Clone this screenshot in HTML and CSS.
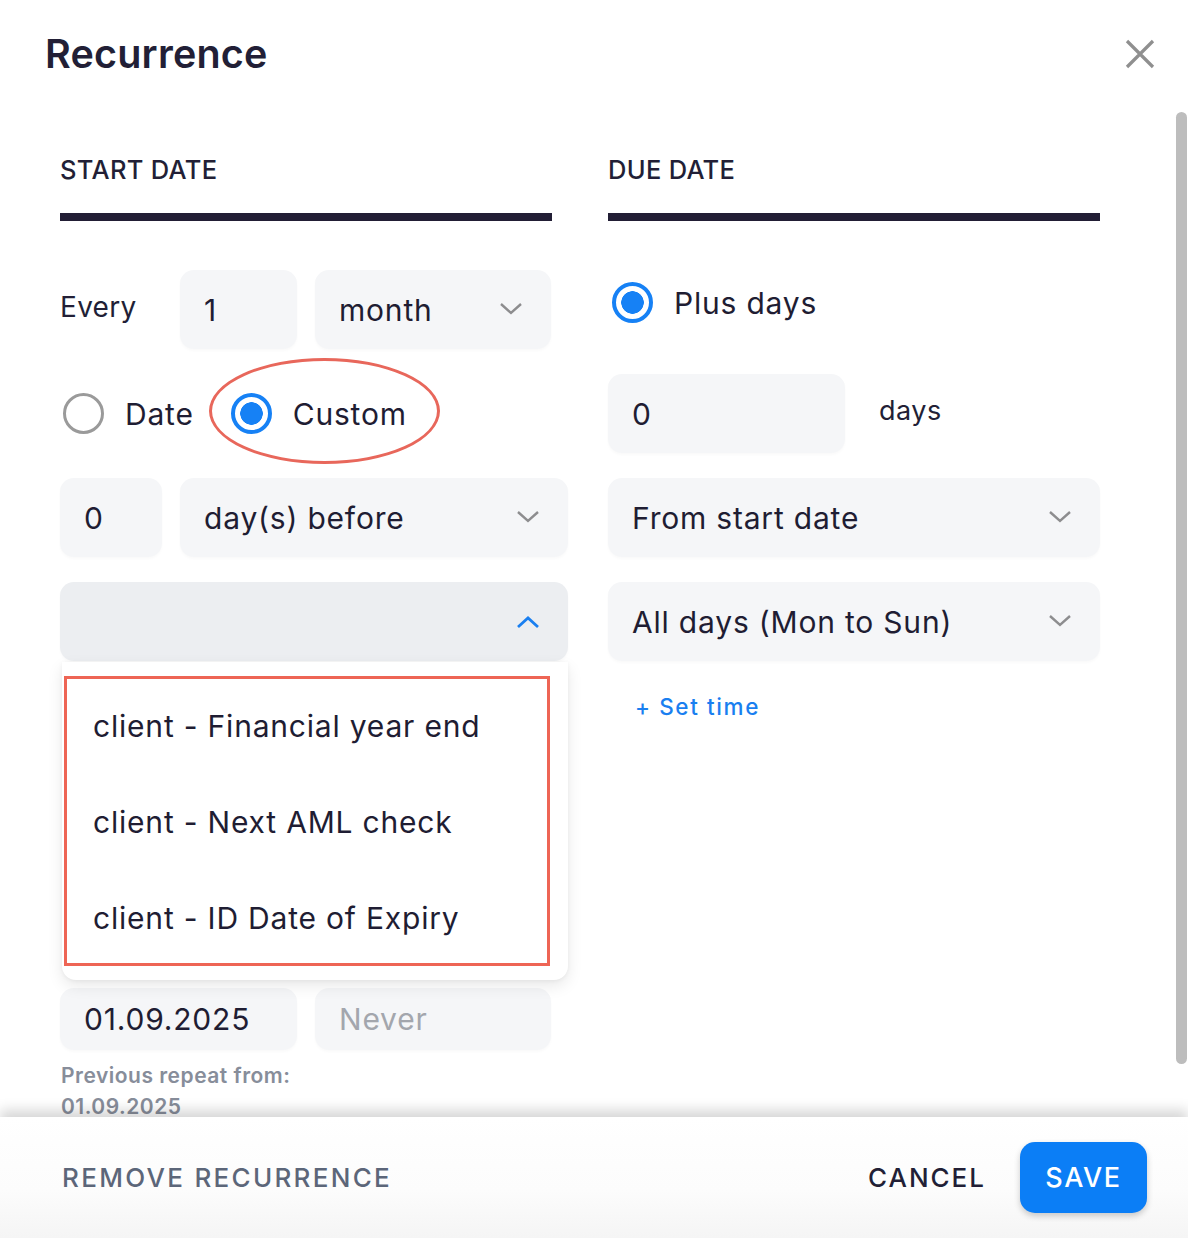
FILE: index.html
```html
<!DOCTYPE html>
<html lang="en">
<head>
<meta charset="utf-8">
<title>Recurrence</title>
<link rel="stylesheet" href="styles.css">
</head>
<body>
<div class="dialog">
  <header class="dlg-head">
    <h1 class="title">Recurrence</h1>
    <button class="close" aria-label="Close">
      <svg width="30" height="30" viewBox="0 0 30 30"><path d="M2 2 L28 28 M28 2 L2 28" stroke="#8f8f8f" stroke-width="3.2" fill="none"/></svg>
    </button>
  </header>

  <div class="scroll">
    <div class="columns">
      <section class="col col-left">
        <div class="tab">START DATE</div>

        <div class="row every-row">
          <span class="lbl">Every</span>
          <div class="field w-117">1</div>
          <div class="field select w-236">month<svg class="chev" viewBox="0 0 24 14"><path d="M2 2 L12 11 L22 2" /></svg></div>
        </div>

        <div class="row radio-row">
          <label class="radio"><span class="dot"></span>Date</label>
          <label class="radio on"><span class="dot"></span>Custom</label>
          <span class="ellipse"></span>
        </div>

        <div class="row">
          <div class="field w-102">0</div>
          <div class="field select grow">day(s) before<svg class="chev" viewBox="0 0 24 14"><path d="M2 2 L12 11 L22 2" /></svg></div>
        </div>

        <div class="row dd-wrap">
          <div class="field select grow open"><svg class="chev up" viewBox="0 0 24 14"><path d="M2 12 L12 3 L22 12" /></svg></div>
          <div class="menu">
            <div class="item">client - Financial year end</div>
            <div class="item">client - Next AML check</div>
            <div class="item">client - ID Date of Expiry</div>
            <span class="redbox"></span>
          </div>
        </div>

        <div class="row hidden-row">
          <span class="lbl">Starts</span>
        </div>
        <div class="row hidden-row">
          <span class="lbl">Ends</span>
        </div>

        <div class="row date-row">
          <div class="field w-237">01.09.2025</div>
          <div class="field w-236 placeholder">Never</div>
        </div>
        <p class="prev">Previous repeat from:<br>01.09.2025</p>
      </section>

      <section class="col col-right">
        <div class="tab">DUE DATE</div>

        <div class="row plus-row">
          <label class="radio on big"><span class="dot"></span>Plus days</label>
        </div>

        <div class="row">
          <div class="field w-237">0</div>
          <span class="days">days</span>
        </div>

        <div class="row">
          <div class="field select grow">From start date<svg class="chev" viewBox="0 0 24 14"><path d="M2 2 L12 11 L22 2" /></svg></div>
        </div>

        <div class="row">
          <div class="field select grow">All days (Mon to Sun)<svg class="chev" viewBox="0 0 24 14"><path d="M2 2 L12 11 L22 2" /></svg></div>
        </div>

        <a class="settime">+ Set time</a>
      </section>
    </div>
    <div class="scrollbar"></div>
  </div>

  <footer class="dlg-foot">
    <button class="btn-remove">REMOVE RECURRENCE</button>
    <div class="actions">
      <button class="btn-cancel">CANCEL</button>
      <button class="btn-save">SAVE</button>
    </div>
  </footer>
</div>
</body>
</html>
```

FILE: styles.css
```css
* { box-sizing: border-box; }
html, body { margin: 0; padding: 0; }
body {
  width: 1188px;
  height: 1238px;
  overflow: hidden;
  background: #ffffff;
  font-family: Inter, "Noto Sans", "Liberation Sans", sans-serif;
  color: #1f1d33;
}
.dialog {
  width: 1188px;
  height: 1238px;
  display: flex;
  flex-direction: column;
  background: #fff;
}
.dlg-head {
  height: 108px;
  flex: none;
  display: flex;
  align-items: flex-start;
  justify-content: space-between;
  padding: 28px 33px 0 45px;
}
.title {
  margin: 0;
  font-size: 39.5px;
  font-weight: 600;
  line-height: 52px;
  color: #221f36;
  letter-spacing: 0.2px;
}
.close {
  border: 0;
  background: none;
  padding: 0;
  margin-top: 11px;
  width: 30px;
  height: 30px;
  cursor: pointer;
}
.scroll {
  flex: 1;
  position: relative;
  overflow: hidden;
}
.columns {
  display: flex;
  gap: 40px;
  padding: 0 0 0 60px;
}
.col { display: flex; flex-direction: column; }
.col-left { width: 508px; }
.col-right { width: 492px; }

.tab {
  width: 492px;
  font-size: 25.5px;
  font-weight: 500;
  line-height: 30px;
  padding-top: 47px;
  height: 113px;
  border-bottom: 8px solid #221e35;
  letter-spacing: 0.3px;
  color: #221f36;
}
.row {
  display: flex;
  align-items: center;
  gap: 18px;
  height: 79px;
  margin-top: 25px;
  position: relative;
}
.col .tab + .row { margin-top: 49px; }

.lbl {
  width: 102px;
  font-size: 28px;
  color: #221f36;
  letter-spacing: 0.3px;
  margin-top: -6px;
}
.field {
  height: 79px;
  background: #f5f6f8;
  border-radius: 14px;
  display: flex;
  align-items: center;
  padding: 0 24px;
  font-size: 30px;
  letter-spacing: 0.8px;
  color: #1f1d33;
  position: relative;
  box-shadow: 0 2px 3px rgba(0, 0, 0, 0.025);
}
.field.placeholder { color: #a3a6ad; }
.w-117 { width: 117px; }
.w-102 { width: 102px; }
.w-236 { width: 236px; }
.w-237 { width: 237px; }
.grow { flex: 1; }
.select .chev {
  position: absolute;
  right: 28px;
  top: 32px;
  width: 24px;
  height: 14px;
  fill: none;
  stroke: #8d8d8f;
  stroke-width: 2.4;
}
.field.open { background: #eceef1; }
.field.open .chev {
  stroke: #1a7ff0;
  stroke-width: 2.8;
  top: 33px;
  right: 28px;
}

.radio-row { gap: 0; padding-left: 3px; }
.radio {
  display: flex;
  align-items: center;
  font-size: 30px;
  letter-spacing: 0.8px;
  color: #1f1d33;
  margin-right: 37px;
}
.radio .dot {
  width: 41px;
  height: 41px;
  border-radius: 50%;
  border: 3.5px solid #9a9a9a;
  margin-right: 21px;
  flex: none;
  background: #fff;
}
.radio.on .dot {
  border: 4px solid #1681f5;
  background: radial-gradient(circle, #1681f5 0 11px, #fff 11.5px);
}
.ellipse {
  position: absolute;
  left: 149px;
  top: -16px;
  width: 231px;
  height: 106px;
  border: 3px solid #e8675b;
  border-radius: 50%;
  pointer-events: none;
}

.dd-wrap { z-index: 5; }
.menu {
  position: absolute;
  left: 2px;
  top: 80px;
  width: 506px;
  padding: 16px 0 14px;
  background: #fff;
  border-radius: 0 0 14px 14px;
  box-shadow: 0 6px 16px rgba(0, 0, 0, 0.09), 0 1px 4px rgba(0, 0, 0, 0.05);
}
.item {
  height: 96px;
  display: flex;
  align-items: center;
  padding-left: 31px;
  font-size: 30px;
  letter-spacing: 0.8px;
  color: #1f1d33;
}
.redbox {
  position: absolute;
  left: 2px;
  top: 14px;
  width: 486px;
  height: 290px;
  border: 3px solid #ee6555;
  pointer-events: none;
}
.hidden-row { visibility: hidden; }
.date-row { margin-top: 119px; height: 62px; }
.date-row .field { height: 62px; }
.prev {
  margin: 10px 0 0 1px;
  font-size: 21px;
  font-weight: 600;
  line-height: 31px;
  letter-spacing: 0.5px;
  color: #878d9a;
}

.plus-row { align-items: flex-start; padding-top: 12px; }
.plus-row .radio .dot { margin-left: 4px; }
.days {
  font-size: 27px;
  letter-spacing: 0.5px;
  color: #221f36;
  margin-left: 16px;
  margin-top: -6px;
}
.settime {
  margin: 32px 0 0 27px;
  font-size: 22.5px;
  font-weight: 500;
  letter-spacing: 1.6px;
  color: #1a7ff0;
  text-decoration: none;
}

.scrollbar {
  position: absolute;
  right: 1px;
  top: 4px;
  width: 11px;
  height: 952px;
  background: #bdbdbd;
  border-radius: 6px;
}

.dlg-foot {
  height: 121px;
  flex: none;
  display: flex;
  align-items: center;
  justify-content: space-between;
  padding: 0 41px 0 62px;
  background: linear-gradient(180deg, #ffffff 0%, #fcfcfc 60%, #f5f5f5 100%);
  box-shadow: 0 -7px 12px rgba(0, 0, 0, 0.16);
  position: relative;
  z-index: 2;
}
.dlg-foot button {
  font-family: Inter, "Noto Sans", "Liberation Sans", sans-serif;
  border: 0;
  background: none;
  cursor: pointer;
  padding: 0;
}
.btn-remove {
  font-size: 26px;
  font-weight: 500;
  letter-spacing: 2.3px;
  color: #5c6679;
}
.actions { display: flex; align-items: center; gap: 34px; }
.btn-cancel {
  font-size: 26px;
  font-weight: 500;
  letter-spacing: 2px;
  color: #221f36;
}
.dlg-foot .btn-save {
  width: 127px;
  height: 71px;
  border-radius: 15px;
  background: #0b7ef6;
  color: #fff;
  font-size: 27px;
  font-weight: 500;
  letter-spacing: 1.6px;
  box-shadow: 0 3px 6px rgba(0, 0, 0, 0.2);
}
```
